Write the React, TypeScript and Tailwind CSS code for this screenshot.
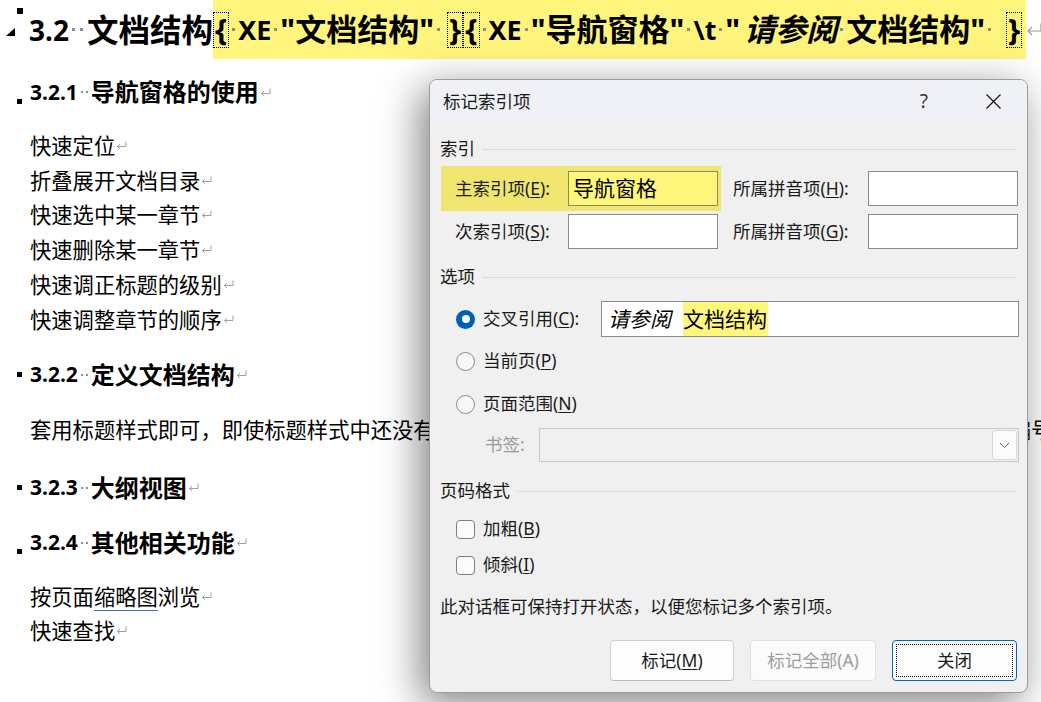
import React from "react";

const docFont = "font-['Noto_Sans','Noto_Sans_CJK_SC',sans-serif]";

function Ret({ big = false }: { big?: boolean }) {
  if (big) {
    return (
      <svg width="16" height="13" viewBox="0 0 16 13" fill="none" stroke="#9a9a9a" strokeWidth="1.2" className="shrink-0">
        <path d="M15 0.5V8H2" />
        <path d="M6 4L2 8L6 12" />
      </svg>
    );
  }
  return (
    <svg width="11" height="9" viewBox="0 0 11 9" fill="none" stroke="#a0a0a0" strokeWidth="1" className="ml-[1px] shrink-0">
      <path d="M10 0.5V5.5H1.5" />
      <path d="M4 3L1.5 5.5L4 8" />
    </svg>
  );
}

// space marks shown by Word as small grey dots
function Dots({ big = false }: { big?: boolean }) {
  if (big) {
    return (
      <span className="flex w-[18px] shrink-0 items-center justify-center gap-[5px]">
        <span className="h-[3px] w-[3px] bg-[#8c8c8c]" />
        <span className="h-[3px] w-[3px] bg-[#8c8c8c]" />
      </span>
    );
  }
  return (
    <span className="flex w-[13px] shrink-0 items-center justify-center gap-[3px]">
      <span className="h-[2px] w-[2px] bg-[#8c8c8c]" />
      <span className="h-[2px] w-[2px] bg-[#8c8c8c]" />
    </span>
  );
}

function Dot() {
  return (
    <span className="flex w-[9px] shrink-0 items-center justify-center">
      <span className="h-[3px] w-[3px] bg-[#8c8c8c]" />
    </span>
  );
}

function Brace({ ch }: { ch: string }) {
  return (
    <span className="flex h-[36px] shrink-0 items-center border border-dotted border-black px-[1px] leading-none">{ch}</span>
  );
}

function Heading({ num, text, low }: { num: string; text: string; low?: boolean }) {
  return (
    <div className="flex h-[34px] items-center whitespace-nowrap text-[24px] font-bold leading-none text-black">
      <span className={low ? "ml-[17px] mr-[8px] mt-[18px] h-[5px] w-[5px] bg-black" : "ml-[17px] mr-[8px] h-[5px] w-[5px] bg-black"} />
      <span className="text-[21px]">{num}</span>
      <Dots />
      <span>{text}</span>
      <Ret />
    </div>
  );
}

function Line({ children }: { children: React.ReactNode }) {
  return (
    <div className="flex h-[34.8px] items-center whitespace-nowrap pl-[30px] text-[21.3px] leading-none text-black">
      {children}
      <Ret />
    </div>
  );
}

function U({ c }: { c: string }) {
  return <span className="underline decoration-1 underline-offset-2">{c}</span>;
}

function Field({ w, h = 35, children, className = "" }: { w: number; h?: number; children?: React.ReactNode; className?: string }) {
  return (
    <div
      className={"flex items-center border border-[#8a8a8a] bg-white " + className}
      style={{ width: w, height: h }}
    >
      {children}
    </div>
  );
}

function Radio({ on }: { on?: boolean }) {
  if (on) {
    return (
      <span className="flex h-[19px] w-[19px] items-center justify-center rounded-full bg-[#005fb8]">
        <span className="h-[8px] w-[8px] rounded-full bg-white" />
      </span>
    );
  }
  return <span className="h-[19px] w-[19px] rounded-full border border-[#8a8a8a] bg-[#f8f8f8]" />;
}

function Check() {
  return <span className="h-[19px] w-[19px] rounded-[4px] border border-[#7f7f7f] bg-[#fbfbfb]" />;
}

function Section({ label, mt }: { label: string; mt: string }) {
  return (
    <div className={"flex h-[20px] items-center pr-[10px] " + mt}>
      <span className="leading-none">{label}</span>
      <span className="ml-[7px] h-px flex-1 bg-[#dadada]" />
    </div>
  );
}

function Dialog() {
  return (
    <div className="absolute left-[429px] top-[79px] flex h-[614px] w-[599px] flex-col overflow-hidden rounded-[8px] border border-[#9c9c9c] bg-[#f0f0f0] text-[17.5px] text-[#1a1a1a] shadow-[-8px_10px_40px_rgba(0,0,0,0.5)] font-['Noto_Sans','Noto_Sans_CJK_SC',sans-serif]">
      <div className="flex h-[43px] shrink-0 items-center bg-[#eff1f7] pl-[13px]">
        <span className="text-[17.5px] leading-none">标记索引项</span>
        <span className="ml-auto mr-[58px] text-[19px] leading-none text-[#333]">?</span>
        <svg width="15" height="15" viewBox="0 0 15 15" className="mr-[26px]" stroke="#1a1a1a" strokeWidth="1.3">
          <path d="M0.5 0.5L14.5 14.5M14.5 0.5L0.5 14.5" />
        </svg>
      </div>

      <div className="flex flex-col pl-[10px]">
        <Section label="索引" mt="mt-[16px]" />

        <div className="mt-[7px] flex h-[45px] items-center">
          <div className="ml-[1px] flex h-[45px] w-[280px] items-center bg-[#f0e56f] pl-[14px]">
            <span className="w-[113px] leading-none">
              主索引项(<U c="E" />):
            </span>
            <div className="flex h-[35px] w-[150px] items-center border border-[#8c8960] bg-[#fff77c] pl-[4px] text-[21px] leading-none text-black">
              导航窗格
            </div>
          </div>
          <span className="ml-[12px] w-[135px] leading-none">
            所属拼音项(<U c="H" />):
          </span>
          <Field w={150} />
        </div>

        <div className="mt-[3px] flex h-[35px] items-center">
          <div className="ml-[1px] flex w-[280px] items-center pl-[14px]">
            <span className="w-[113px] leading-none">
              次索引项(<U c="S" />):
            </span>
            <Field w={150} />
          </div>
          <span className="ml-[12px] w-[135px] leading-none">
            所属拼音项(<U c="G" />):
          </span>
          <Field w={150} />
        </div>

        <Section label="选项" mt="mt-[18px]" />

        <div className="mt-[14px] flex h-[36px] items-center">
          <span className="ml-[16px]">
            <Radio on />
          </span>
          <span className="ml-[8px] w-[118px] leading-none">
            交叉引用(<U c="C" />):
          </span>
          <Field w={418} h={36} className="pl-[6px] text-[21px] leading-none text-black">
            <span className="italic">请参阅</span>
            <span className="w-[12px]" />
            <span className="flex h-[34px] items-center bg-[#fff77c] pr-[1px]">文档结构</span>
          </Field>
        </div>

        <div className="mt-[12px] flex h-[24px] items-center">
          <span className="ml-[16px] flex">
            <Radio />
          </span>
          <span className="ml-[8px] leading-none">
            当前页(<U c="P" />)
          </span>
        </div>

        <div className="mt-[19px] flex h-[24px] items-center">
          <span className="ml-[16px] flex">
            <Radio />
          </span>
          <span className="ml-[8px] leading-none">
            页面范围(<U c="N" />)
          </span>
        </div>

        <div className="mt-[12px] flex h-[34px] items-center">
          <span className="ml-[45px] w-[54px] whitespace-nowrap leading-none text-[#9a9a9a]">书签:</span>
          <div className="flex h-[34px] w-[480px] items-center justify-end border border-[#c9c9c9] bg-[#f0f0f0] pr-[1px]">
            <div className="flex h-[30px] w-[25px] items-center justify-center rounded-[3px] border border-[#d6d6d6] bg-[#fbfbfb]">
              <svg width="11" height="7" viewBox="0 0 11 7" fill="none" stroke="#5a5a5a" strokeWidth="1">
                <path d="M1 1L5.5 5.5L10 1" />
              </svg>
            </div>
          </div>
        </div>

        <Section label="页码格式" mt="mt-[19px]" />

        <div className="mt-[16px] flex h-[24px] items-center">
          <span className="ml-[16px] flex">
            <Check />
          </span>
          <span className="ml-[8px] leading-none">
            加粗(<U c="B" />)
          </span>
        </div>

        <div className="mt-[12px] flex h-[24px] items-center">
          <span className="ml-[16px] flex">
            <Check />
          </span>
          <span className="ml-[8px] leading-none">
            倾斜(<U c="I" />)
          </span>
        </div>

        <div className="mt-[18px] flex h-[24px] items-center leading-none">此对话框可保持打开状态，以便您标记多个索引项。</div>

        <div className="mt-[21px] flex items-center justify-end gap-[16px] pr-[10px]">
          <div className="flex h-[41px] w-[124px] items-center justify-center rounded-[4px] border border-[#d0d0d0] border-b-[#bcbcbc] bg-[#fdfdfd] leading-none">
            标记(<U c="M" />)
          </div>
          <div className="flex h-[41px] w-[126px] items-center justify-center rounded-[4px] border border-[#e0e0e0] bg-[#fbfbfb] leading-none text-[#9d9d9d]">
            标记全部(A)
          </div>
          <div className="flex h-[41px] w-[125px] items-center justify-center rounded-[4px] border-[1.5px] border-[#0067c0] bg-[#fdfdfd] p-[3px]">
            <div className="flex h-full w-full items-center justify-center border border-dotted border-black leading-none">关闭</div>
          </div>
        </div>
      </div>
    </div>
  );
}

export default function App() {
  return (
    <div className={"relative h-[702px] w-[1041px] overflow-hidden bg-white " + docFont}>
      <div className="flex flex-col">
        <div className="flex h-[59px] items-center whitespace-nowrap text-[31px] font-bold leading-none text-black">
          <div className="flex h-full w-[29px] shrink-0 flex-col">
            <span className="ml-[17px] mt-[8px] h-[6px] w-[6px] bg-black" />
            <svg width="9" height="8" viewBox="0 0 9 8" className="ml-[6px] mt-[14px]">
              <path d="M9 0V8H0Z" fill="#000" />
            </svg>
          </div>
          <span className="shrink-0 text-[28px]">3.2</span>
          <Dots big />
          <span className="shrink-0 text-[31.5px]">文档结构</span>
          <div className="flex h-full w-[813px] shrink-0 items-center overflow-hidden bg-[#fff57c]">
            <Brace ch="{" />
            <Dot />
            <span className="shrink-0 text-[27px]">XE</span>
            <Dot />
            <span className="shrink-0">"文档结构"</span>
            <Dot />
            <span className="w-[4px] shrink-0" />
            <Brace ch="}" />
            <Brace ch="{" />
            <Dot />
            <span className="shrink-0 text-[27px]">XE</span>
            <Dot />
            <span className="shrink-0">"导航窗格"</span>
            <Dot />
            <span className="shrink-0 text-[27px]">\t</span>
            <Dot />
            <span className="shrink-0">"</span>
            <span className="ml-[4px] shrink-0 italic">请参阅</span>
            <Dot />
            <span className="shrink-0">文档结构"</span>
            <Dot />
            <span className="w-[12px] shrink-0" />
            <Brace ch="}" />
          </div>
          <Ret big />
        </div>

        <div className="mt-[16px]">
          <Heading num="3.2.1" text="导航窗格的使用" low />
        </div>

        <div className="mt-[19px]">
          <Line>快速定位</Line>
          <Line>折叠展开文档目录</Line>
          <Line>快速选中某一章节</Line>
          <Line>快速删除某一章节</Line>
          <Line>快速调正标题的级别</Line>
          <Line>快速调整章节的顺序</Line>
        </div>

        <div className="mt-[21px]">
          <Heading num="3.2.2" text="定义文档结构" />
        </div>

        <div className="mt-[21px] flex h-[34px] items-center overflow-hidden whitespace-nowrap pl-[30px] text-[21.3px] leading-none text-black">
          套用标题样式即可，即使标题样式中还没有设置任何格式或编号，导航窗格中也会自动显示出各级标题的编号和标题文字。
        </div>

        <div className="mt-[24px]">
          <Heading num="3.2.3" text="大纲视图" />
        </div>

        <div className="mt-[21px]">
          <Heading num="3.2.4" text="其他相关功能" low />
        </div>

        <div className="mt-[19px]">
          <Line>
            按页面
            <span className="underline decoration-[#2f6fd8] decoration-1 underline-offset-[5px]">缩略图</span>
            浏览
          </Line>
          <Line>快速查找</Line>
        </div>
      </div>

      <Dialog />
    </div>
  );
}
